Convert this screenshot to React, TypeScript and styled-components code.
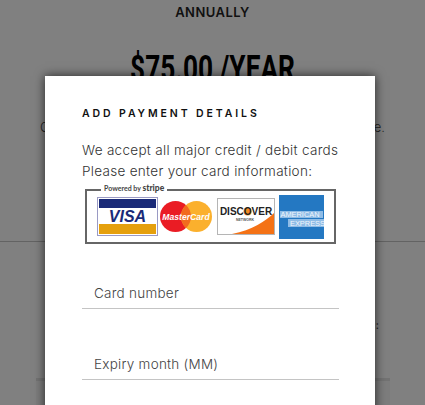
import React from "react";
import styled, { createGlobalStyle } from "styled-components";

const GlobalStyle = createGlobalStyle`
  html, body {
    margin: 0;
    padding: 0;
    background: #808080;
  }
  #root {
    height: 405px;
    overflow: hidden;
  }
`;

const Page = styled.div`
  position: relative;
  width: 425px;
  height: 405px;
  overflow: hidden;
  background: #808080;
  font-family: "Inter", "Liberation Sans", sans-serif;
`;

const PlanTitle = styled.div`
  padding-top: 5px;
  height: 15px;
  text-align: center;
  font-size: 13px;
  line-height: 15px;
  font-weight: 600;
  letter-spacing: 0.45px;
  color: #111;
`;

const Price = styled.div`
  margin-top: 30px;
  text-align: center;
  font-family: "Roboto", "Liberation Sans", sans-serif;
  font-size: 37px;
  line-height: 38px;
  font-weight: 700;
  color: #000;
  transform: scaleX(0.71);
`;

const PlanNote = styled.div`
  margin-top: 31px;
  padding: 0 40px;
  display: flex;
  justify-content: space-between;
  font-size: 13px;
  line-height: 16px;
  font-weight: 300;
  color: #222;
`;

const Divider = styled.div`
  margin-top: 106px;
  height: 1px;
  background: #636363;
`;

const SideMark = styled.div`
  margin: 76px 46px 0 0;
  height: 14px;
  text-align: right;
  font-size: 11px;
  line-height: 14px;
  color: #222;
`;

const LowerBox = styled.div`
  margin: 46px 35px 0 36px;
  height: 40px;
  border-top: 3px solid #737373;
  background: #7d7d7d;
`;

const Modal = styled.div`
  position: absolute;
  left: 45px;
  top: 76px;
  width: 330px;
  height: 340px;
  box-sizing: border-box;
  padding: 31px 37px 0;
  background: #fff;
  box-shadow: 0 0 10px rgba(0, 0, 0, 0.7);
`;

const ModalTitle = styled.h2`
  margin: 0;
  font-size: 10.5px;
  line-height: 14px;
  font-weight: 600;
  letter-spacing: 2.9px;
  color: #111;
`;

const Intro = styled.p`
  margin: 19px 0 0;
  font-size: 13.5px;
  line-height: 21px;
  font-weight: 300;
  letter-spacing: 0.3px;
  color: #333;
  white-space: nowrap;
`;

const CardsFrame = styled.div`
  position: relative;
  margin: 7px 0 0 3px;
  width: 251px;
  height: 55px;
  box-sizing: border-box;
  border: 2px solid #666;
  display: flex;
  align-items: center;
  padding-left: 10px;
`;

const FrameLegend = styled.span`
  position: absolute;
  left: 14px;
  top: -8px;
  padding: 0 3px;
  background: #fff;
  font-family: "Lato", "Liberation Sans", sans-serif;
  font-size: 7px;
  line-height: 10px;
  font-weight: 700;
  color: #444;
`;

const LegendBrand = styled.b`
  font-size: 8.5px;
  font-weight: 900;
`;

const CardLogo = styled.svg<{ $gap?: number }>`
  display: block;
  flex: none;
  margin-left: ${({ $gap = 0 }) => $gap}px;
`;

const Field = styled.label`
  display: block;
  box-sizing: border-box;
  height: 37px;
  margin-top: 34px;
  width: 257px;
  padding: 12px 12px 0;
  border-bottom: 1px solid #c4c4c4;
  font-size: 13.5px;
  line-height: 18px;
  font-weight: 300;
  letter-spacing: 0.25px;
  color: #444;
`;

const FirstField = styled(Field)`
  margin-top: 28px;
`;

const App = () => (
  <Page>
    <GlobalStyle />
    <PlanTitle>ANNUALLY</PlanTitle>
    <Price>$75.00 /YEAR</Price>
    <PlanNote>
      <span>C</span>
      <span>e.</span>
    </PlanNote>
    <Divider />
    <SideMark>:</SideMark>
    <LowerBox />
    <Modal>
      <ModalTitle>ADD PAYMENT DETAILS</ModalTitle>
      <Intro>
        We accept all major credit / debit cards
        <br />
        Please enter your card information:
      </Intro>
      <CardsFrame>
        <FrameLegend>
          Powered by <LegendBrand>stripe</LegendBrand>
        </FrameLegend>
        <CardLogo width="61" height="39" viewBox="0 0 61 39">
          <rect x="0.5" y="0.5" width="60" height="38" fill="#fff" stroke="#9a9ac4" />
          <rect x="2" y="2" width="57" height="9" fill="#1a2a78" />
          <rect x="2" y="27" width="57" height="10" fill="#e5a00d" />
          <text x="30.5" y="25" textAnchor="middle" fontFamily="Liberation Sans" fontSize="16" fontWeight="700" fontStyle="italic" fill="#1a2a78">VISA</text>
        </CardLogo>
        <CardLogo $gap={2} width="52" height="31" viewBox="0 0 52 31">
          <circle cx="15.5" cy="15.5" r="15.5" fill="#ea1c24" />
          <circle cx="36.5" cy="15.5" r="15.5" fill="#fbb02d" />
          <path d="M26 4.1 A15.5 15.5 0 0 1 26 26.9 A15.5 15.5 0 0 1 26 4.1 Z" fill="#f26a1f" />
          <text x="26" y="19" textAnchor="middle" fontFamily="Liberation Sans" fontSize="8.6" fontWeight="700" fontStyle="italic" fill="#fff">MasterCard</text>
        </CardLogo>
        <CardLogo $gap={5} width="58" height="37" viewBox="0 0 58 37">
          <rect x="0.5" y="0.5" width="57" height="36" fill="#fff" stroke="#b5b5b5" />
          <path d="M15 36 C35 32 49 23 57 15 V36 Z" fill="#f47216" />
          <circle cx="30.6" cy="13.4" r="4" fill="#f68b1f" />
          <text x="29" y="17" textAnchor="middle" fontFamily="Liberation Sans" fontSize="10" fontWeight="700" fill="#222">DISCOVER</text>
          <text x="28" y="23" textAnchor="middle" fontFamily="Liberation Sans" fontSize="3.5" fontWeight="700" fill="#555">NETWORK</text>
        </CardLogo>
        <CardLogo $gap={4} width="45" height="44" viewBox="0 0 45 44">
          <rect width="45" height="44" fill="#2478c2" />
          <rect x="1" y="16" width="43" height="7" fill="#8fbce6" />
          <rect x="9" y="24" width="36" height="8" fill="#8fbce6" />
          <text x="1.5" y="22" fontFamily="Liberation Sans" fontSize="7.4" fill="#f1f6fc">AMERICAN</text>
          <text x="11" y="31" fontFamily="Liberation Sans" fontSize="7.4" fill="#f1f6fc">EXPRESS</text>
        </CardLogo>
      </CardsFrame>
      <FirstField>Card number</FirstField>
      <Field>Expiry month (MM)</Field>
    </Modal>
  </Page>
);

export default App;
